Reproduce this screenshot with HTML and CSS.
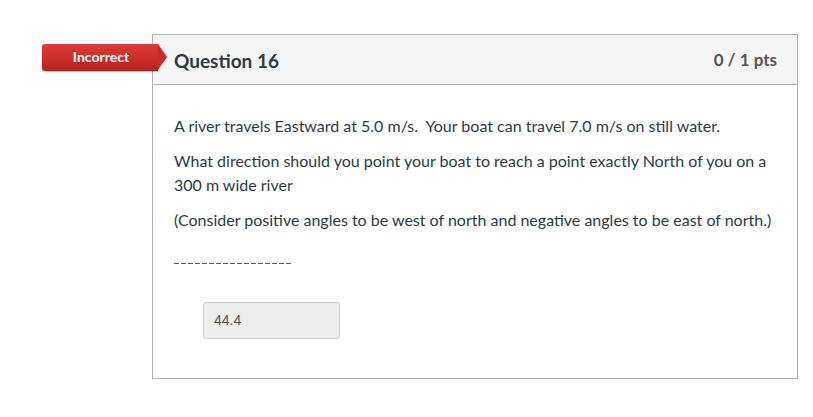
FILE: index.html
```html
<!DOCTYPE html>
<html>
<head>
<meta charset="utf-8">
<link rel="stylesheet" href="styles.css">
</head>
<body>
<div class="page">
  <div class="question">
    <div class="badge"><span class="badge-text">Incorrect</span><span class="badge-arrow"></span></div>
    <div class="header">
      <span class="title">Question 16</span>
      <span class="pts">0 / 1 pts</span>
    </div>
    <div class="content">
      <p>A river travels Eastward at 5.0 m/s.&nbsp; Your boat can travel 7.0 m/s on still water.</p>
      <p>What direction should you point your boat to reach a point exactly North of you on a 300 m wide river</p>
      <p>(Consider positive angles to be west of north and negative angles to be east of north.)</p>
      <div class="rule"></div>
      <div class="answer-row">
        <div class="answer">44.4</div>
      </div>
    </div>
  </div>
</div>
</body>
</html>
```

FILE: styles.css
```css
html, body {
  margin: 0;
  padding: 0;
  background: #ffffff;
}
.page {
  padding: 34px 0 0 152px;
}
.question {
  position: relative;
  width: 644px;
  border: 1px solid #b3b3b3;
  font-family: Lato, "Open Sans", sans-serif;
  color: #2d3b45;
}
.badge {
  position: absolute;
  left: -111px;
  top: 9px;
  display: flex;
  height: 27px;
}
.badge-text {
  width: 114px;
  padding-left: 2px;
  height: 27px;
  line-height: 26px;
  text-align: center;
  color: #ffffff;
  font-weight: bold;
  font-size: 14px;
  background: linear-gradient(#dd3b35, #b8211d);
  border-radius: 3px 0 0 3px;
  box-shadow: 0 1px 1px rgba(0,0,0,0.25);
}
.badge-arrow {
  width: 0;
  height: 0;
  border-top: 13.5px solid transparent;
  border-bottom: 13.5px solid transparent;
  border-left: 9px solid #c92a26;
}
.header {
  display: flex;
  justify-content: space-between;
  align-items: center;
  height: 49px;
  padding: 0 20px 0 21px;
  background: #f5f5f5;
  border-bottom: 1px solid #b3b3b3;
}
.title {
  font-size: 19px;
  font-weight: bold;
  padding-top: 1px;
}
.pts {
  font-size: 17px;
  font-weight: bold;
  color: #555555;
}
.content {
  padding: 29px 20px 39px 21px;
  font-size: 16px;
}
.content p {
  margin: 0 0 11px 0;
  line-height: 24px;
}
.rule {
  margin-top: 31px;
  width: 117px;
  height: 1px;
  background: repeating-linear-gradient(90deg, #5a5a5a 0, #5a5a5a 5px, transparent 5px, transparent 7px);
}
.answer-row {
  padding: 38px 0 0 29px;
}
.answer {
  width: 125px;
  height: 35px;
  line-height: 35px;
  padding-left: 10px;
  background: #ededed;
  border: 1px solid #cccccc;
  border-radius: 3px;
  font-family: "Liberation Sans", Arial, sans-serif;
  font-size: 14px;
  color: #555555;
}
```
